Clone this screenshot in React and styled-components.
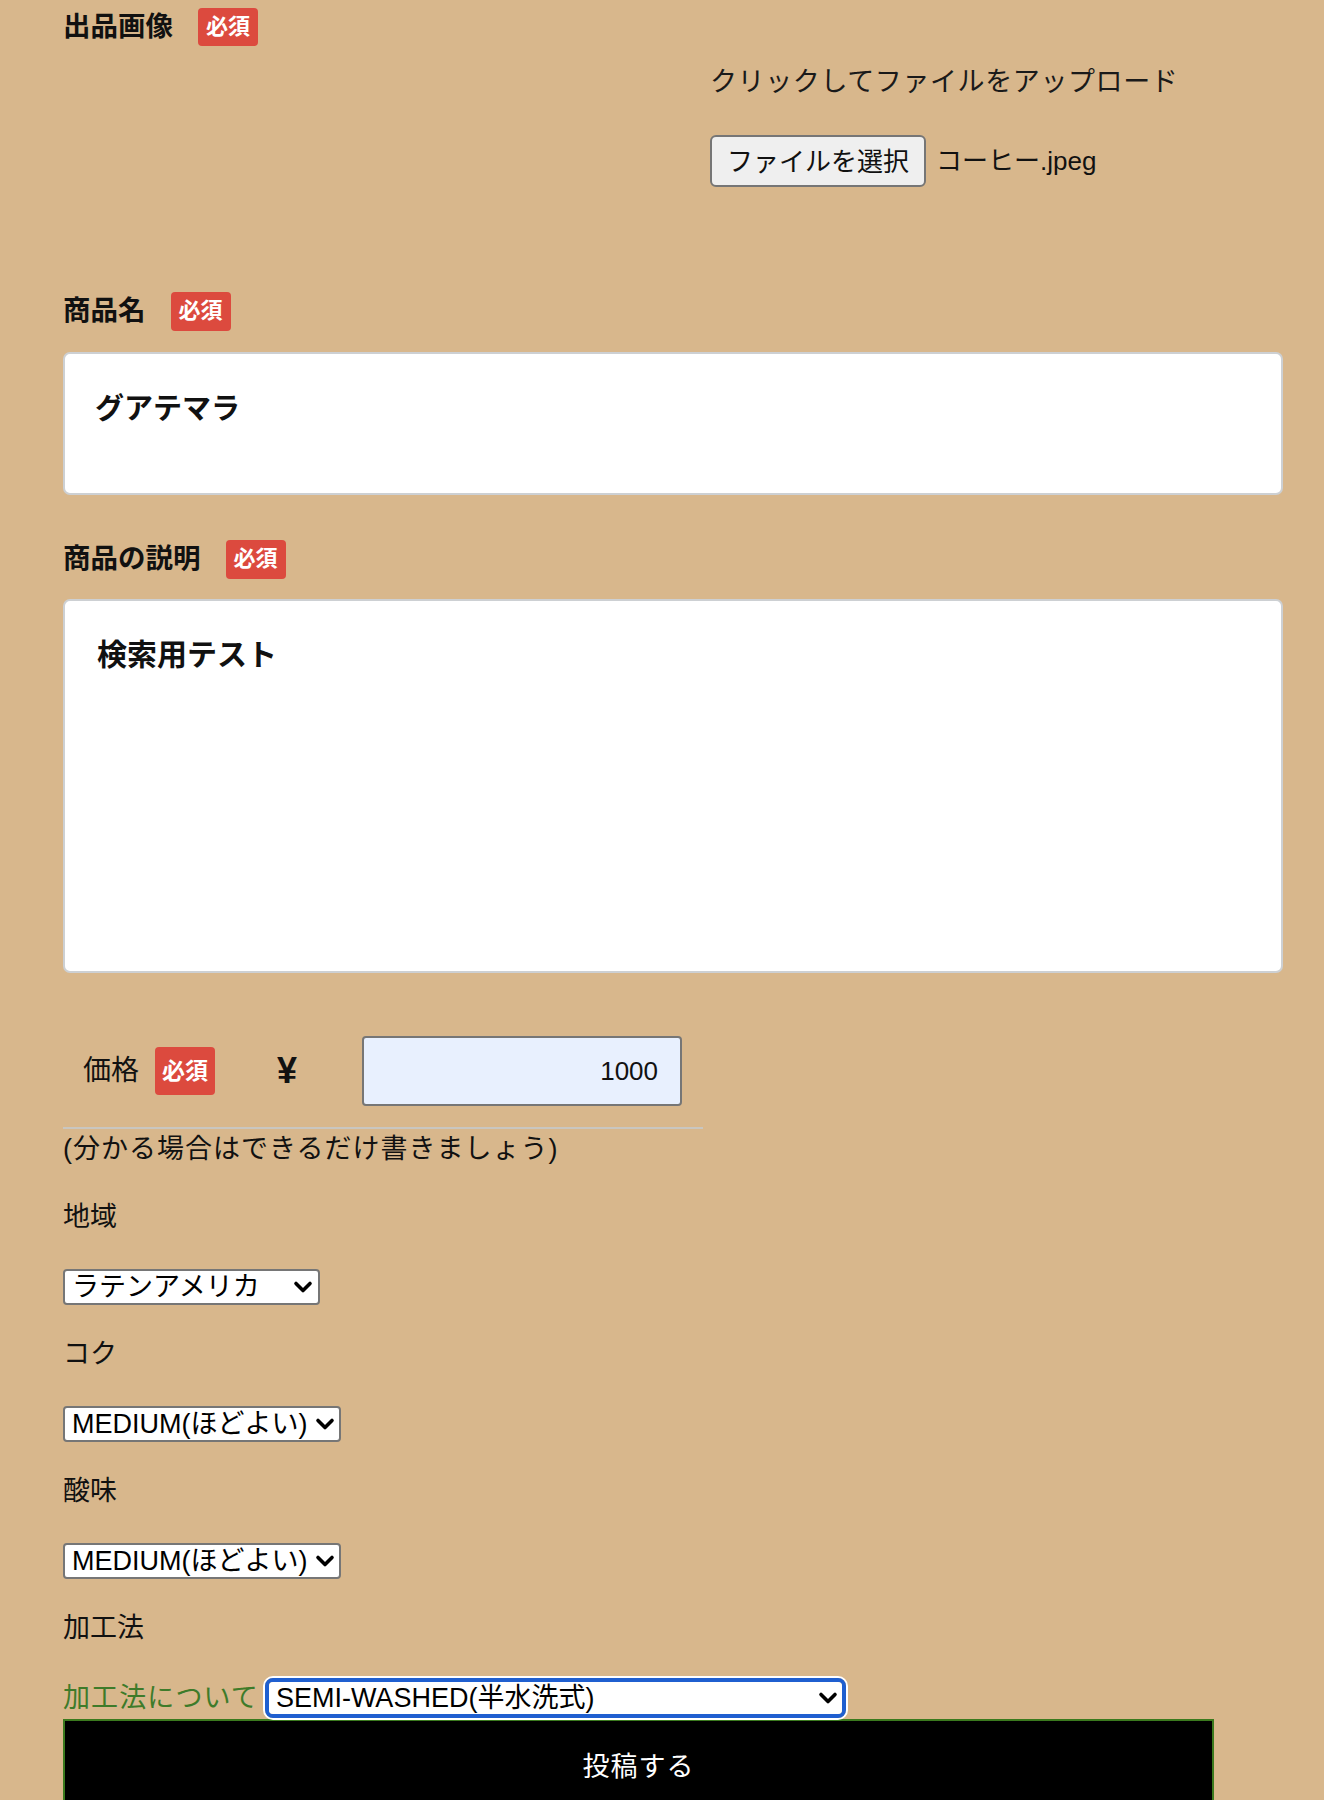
import React from "react";
import styled, { createGlobalStyle } from "styled-components";

const GlobalStyle = createGlobalStyle`
  html, body {
    margin: 0;
    padding: 0;
  }
  body {
    background: #d8b78c;
    font-family: "Liberation Sans", "Noto Sans CJK JP", sans-serif;
    color: #111;
  }
`;

const Page = styled.form`
  box-sizing: border-box;
  min-height: 1800px;
  padding: 7px 41px 0 63px;
  display: flex;
  flex-direction: column;
  align-items: flex-start;
`;

const SectionHead = styled.div`
  display: flex;
  align-items: center;
  gap: 25px;
  height: 40px;
  margin-top: ${(p) => p.$top || 0}px;
`;

const HeadLabel = styled.span`
  font-size: 27.5px;
  font-weight: 700;
  line-height: 40px;
`;

const Badge = styled.span`
  display: inline-flex;
  align-items: center;
  justify-content: center;
  width: ${(p) => p.$w || 60}px;
  height: ${(p) => p.$h || 39}px;
  margin-left: ${(p) => p.$left || 0}px;
  background: #dc4a3e;
  color: #fff;
  border-radius: 4px;
  font-size: ${(p) => p.$size || 22}px;
  font-weight: 700;
  line-height: 1;
`;

const Upload = styled.div`
  margin: 15px 0 0 647px;
`;

const UploadHint = styled.div`
  font-size: 27px;
  line-height: 40px;
  letter-spacing: 0.6px;
  color: #1a1a1a;
`;

const FileRow = styled.label`
  display: flex;
  align-items: center;
  gap: 10px;
  margin-top: 33px;
`;

const FileButton = styled.span`
  box-sizing: border-box;
  display: inline-flex;
  align-items: center;
  justify-content: center;
  width: 216px;
  height: 52px;
  padding-bottom: 4px;
  border: 2px solid #767676;
  border-radius: 6px;
  background: #efefef;
  font-size: 26px;
  color: #111;
`;

const FileName = styled.span`
  padding-bottom: 5px;
  font-size: 26px;
`;

const TextInput = styled.input`
  box-sizing: border-box;
  width: 100%;
  height: 143px;
  margin-top: 21px;
  padding: 17px 30px 52px;
  border: 2px solid #cdd0d3;
  border-radius: 7px;
  background: #fff;
  font-family: inherit;
  font-size: 29px;
  font-weight: 700;
  color: #111;
  outline: none;
`;

const TextArea = styled.textarea`
  box-sizing: border-box;
  width: 100%;
  height: 374px;
  margin-top: 20px;
  padding: 33px 32px;
  border: 2px solid #cdd0d3;
  border-radius: 7px;
  background: #fff;
  font-family: inherit;
  font-size: 30px;
  font-weight: 700;
  line-height: 42px;
  color: #111;
  resize: none;
  outline: none;
`;

const PriceRow = styled.div`
  box-sizing: border-box;
  display: flex;
  align-items: center;
  width: 640px;
  margin-top: 63px;
  padding: 0 0 21px 20px;
  border-bottom: 2px solid #c9c6c0;
`;

const PriceLabel = styled.span`
  font-size: 28px;
  line-height: 40px;
`;

const Yen = styled.span`
  width: 85px;
  margin-left: 62px;
  font-size: 36px;
  font-weight: 700;
  line-height: 40px;
`;

const PriceInput = styled.input`
  box-sizing: border-box;
  width: 320px;
  height: 70px;
  padding: 0 22px;
  border: 2px solid #767676;
  border-radius: 4px;
  background: #e8f0fe;
  font-family: inherit;
  font-size: 26px;
  color: #111;
  text-align: right;
  outline: none;
`;

const Note = styled.p`
  margin: 1px 0 0;
  font-size: 27px;
  line-height: 38px;
  letter-spacing: 1px;
`;

const FieldLabel = styled.p`
  margin: 30px 0 0;
  font-size: 27px;
  line-height: 38px;
`;

const SelectWrap = styled.div`
  position: relative;
  box-sizing: border-box;
  width: ${(p) => p.$w}px;
  height: ${(p) => (p.$focused ? 40 : 36)}px;
  margin-top: ${(p) => p.$top ?? 33}px;
  ${(p) =>
    p.$focused &&
    `
    border: 4px solid #1f5fd0;
    border-radius: 8px;
    box-shadow: 0 0 0 2px #fff;
  `}
`;

const Select = styled.select`
  appearance: none;
  -webkit-appearance: none;
  box-sizing: border-box;
  width: 100%;
  height: 100%;
  margin: 0;
  padding: 0 30px 0 7px;
  border: ${(p) => (p.$focused ? "none" : "2px solid #767676")};
  border-radius: 4px;
  background: #fff;
  font-family: inherit;
  font-size: 27px;
  color: #000;
  outline: none;
`;

const Chevron = styled.svg`
  position: absolute;
  right: ${(p) => p.$right || 7}px;
  top: 50%;
  transform: translateY(-50%);
  pointer-events: none;
`;

const MethodRow = styled.div`
  display: flex;
  align-items: center;
  height: 40px;
  margin-top: 31px;
`;

const GreenLabel = styled.label`
  margin-right: 6px;
  font-size: 27px;
  line-height: 40px;
  letter-spacing: 1.1px;
  color: #3e7b2a;
`;

const Submit = styled.button`
  box-sizing: border-box;
  width: 1151px;
  height: 94px;
  margin-top: 1px;
  padding-bottom: 4px;
  border: 2px solid #3b7a1e;
  background: #000;
  color: #fff;
  font-family: inherit;
  font-size: 27px;
  letter-spacing: 1px;
  cursor: pointer;
`;

const ChevronIcon = ({ right }) => (
  <Chevron $right={right} width="20" height="13" viewBox="0 0 20 13">
    <path
      d="M3 3 L10 10 L17 3"
      fill="none"
      stroke="#000"
      strokeWidth="3.6"
      strokeLinecap="round"
      strokeLinejoin="round"
    />
  </Chevron>
);

const Dropdown = ({ width, options, value, focused, right, top }) => (
  <SelectWrap $w={width} $focused={focused} $top={top}>
    <Select $focused={focused} defaultValue={value}>
      {options.map((o) => (
        <option key={o}>{o}</option>
      ))}
    </Select>
    <ChevronIcon right={right} />
  </SelectWrap>
);

const levels = ["LIGHT(かるい)", "MEDIUM(ほどよい)", "STRONG(つよい)"];

export default function App() {
  return (
    <>
      <GlobalStyle />
      <Page onSubmit={(e) => e.preventDefault()}>
        <SectionHead>
          <HeadLabel>出品画像</HeadLabel>
          <Badge $h={38}>必須</Badge>
        </SectionHead>
        <Upload>
          <UploadHint>クリックしてファイルをアップロード</UploadHint>
          <FileRow>
            <FileButton>ファイルを選択</FileButton>
            <FileName>コーヒー.jpeg</FileName>
          </FileRow>
        </Upload>

        <SectionHead $top={104}>
          <HeadLabel>商品名</HeadLabel>
          <Badge>必須</Badge>
        </SectionHead>
        <TextInput defaultValue="グアテマラ" />

        <SectionHead $top={44}>
          <HeadLabel>商品の説明</HeadLabel>
          <Badge>必須</Badge>
        </SectionHead>
        <TextArea defaultValue="検索用テスト" />

        <PriceRow>
          <PriceLabel>価格</PriceLabel>
          <Badge $w={60} $h={48} $left={16} $size={23}>
            必須
          </Badge>
          <Yen>¥</Yen>
          <PriceInput defaultValue="1000" />
        </PriceRow>
        <Note>(分かる場合はできるだけ書きましょう)</Note>

        <FieldLabel>地域</FieldLabel>
        <Dropdown
          width={257}
          value="ラテンアメリカ"
          options={["アジア", "アフリカ", "ラテンアメリカ"]}
        />

        <FieldLabel>コク</FieldLabel>
        <Dropdown width={278} value="MEDIUM(ほどよい)" options={levels} right={6} />

        <FieldLabel>酸味</FieldLabel>
        <Dropdown width={278} value="MEDIUM(ほどよい)" options={levels} right={6} />

        <FieldLabel>加工法</FieldLabel>
        <MethodRow>
          <GreenLabel>加工法について</GreenLabel>
          <Dropdown
            width={581}
            top={0}
            focused
            right={4}
            value="SEMI-WASHED(半水洗式)"
            options={["WASHED(水洗式)", "SEMI-WASHED(半水洗式)", "NATURAL(非水洗式)"]}
          />
        </MethodRow>
        <Submit type="submit">投稿する</Submit>
      </Page>
    </>
  );
}
